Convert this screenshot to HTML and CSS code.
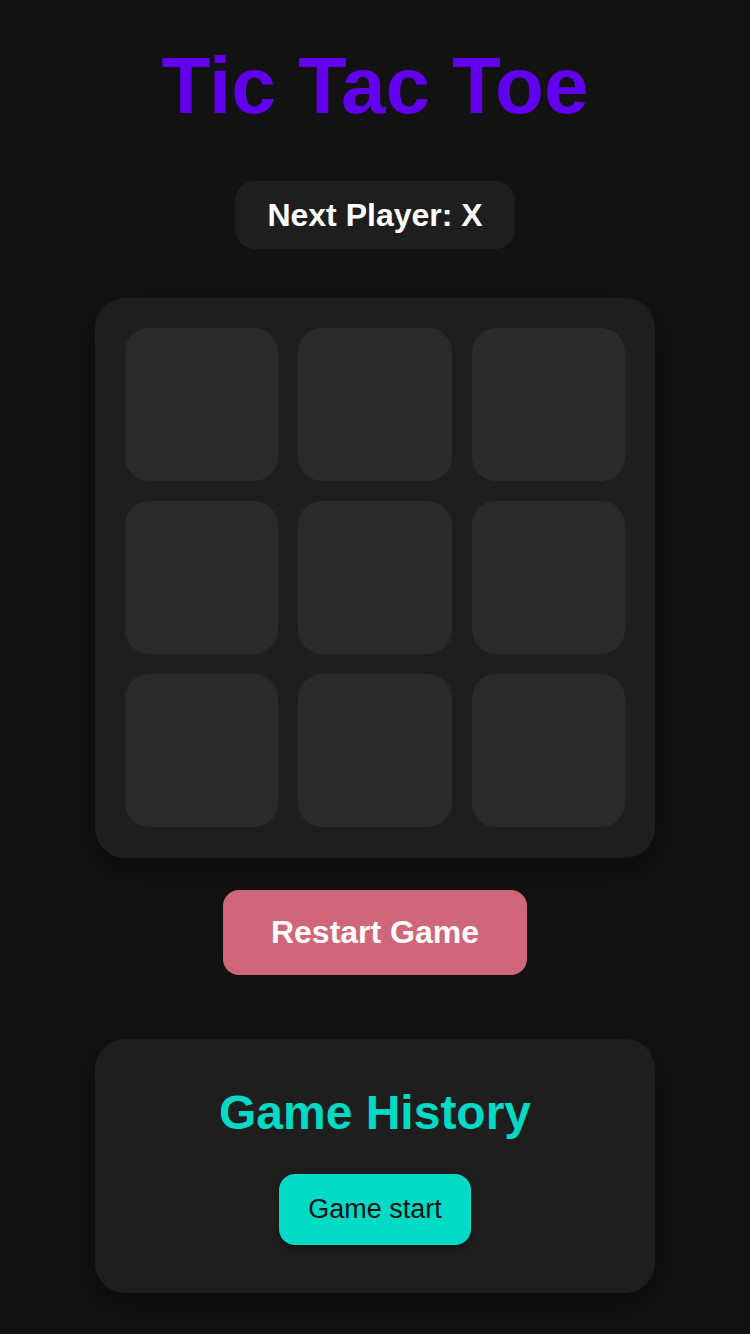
FILE: index.html
```html
<!DOCTYPE html>
<html lang="en">
<head>
<meta charset="utf-8">
<title>Tic Tac Toe</title>
<link rel="stylesheet" href="styles.css">
</head>
<body>
<main class="app">
  <h1 class="title">Tic Tac Toe</h1>
  <div class="status">Next Player: X</div>
  <div class="board">
    <button class="cell"></button>
    <button class="cell"></button>
    <button class="cell"></button>
    <button class="cell"></button>
    <button class="cell"></button>
    <button class="cell"></button>
    <button class="cell"></button>
    <button class="cell"></button>
    <button class="cell"></button>
  </div>
  <button class="restart">Restart Game</button>
  <section class="history">
    <h2 class="history-title">Game History</h2>
    <button class="history-item">Game start</button>
  </section>
</main>
</body>
</html>
```

FILE: styles.css
```css
* { box-sizing: border-box; }
html, body {
  margin: 0;
  padding: 0;
  background: #121212;
}
body {
  font-family: "Liberation Sans", Arial, Helvetica, sans-serif;
  color: #ffffff;
  min-height: 1334px;
}
.app {
  display: flex;
  flex-direction: column;
  align-items: center;
  padding-top: 40px;
}
.title {
  margin: 0 0 49px;
  font-size: 80px;
  font-weight: 700;
  color: #6200ee;
  line-height: 92px;
}
.status {
  background: #1e1e1e;
  border-radius: 20px;
  padding: 15.5px 32px;
  font-size: 32px;
  font-weight: 700;
  color: #ffffff;
  margin-bottom: 48.5px;
}
.board {
  width: 560px;
  height: 560px;
  padding: 30px;
  background: #1e1e1e;
  border-radius: 30px;
  display: grid;
  grid-template-columns: repeat(3, 1fr);
  grid-template-rows: repeat(3, 1fr);
  gap: 20px;
  box-shadow: 0 10px 30px rgba(0, 0, 0, 0.45);
}
.cell {
  border: none;
  background: #2a2a2a;
  border-radius: 24px;
  padding: 0;
  margin: 0;
}
.restart {
  margin-top: 32px;
  border: none;
  background: #cf6679;
  color: #ffffff;
  font-family: inherit;
  font-size: 32px;
  font-weight: 700;
  padding: 24px 48px;
  border-radius: 16px;
  line-height: normal;
}
.history {
  margin-top: 64.5px;
  width: 560px;
  background: #1e1e1e;
  border-radius: 30px;
  padding: 46px 30px 48px;
  display: flex;
  flex-direction: column;
  align-items: center;
  box-shadow: 0 10px 30px rgba(0, 0, 0, 0.45);
}
.history-title {
  margin: 0 0 34px;
  font-size: 48px;
  font-weight: 700;
  color: #03dac6;
}
.history-item {
  border: none;
  background: #03dac6;
  color: #121212;
  font-family: inherit;
  font-size: 27px;
  font-weight: 400;
  padding: 20px 29px;
  border-radius: 16px;
  line-height: normal;
  box-shadow: 0 4px 10px rgba(0, 0, 0, 0.3);
}
```
